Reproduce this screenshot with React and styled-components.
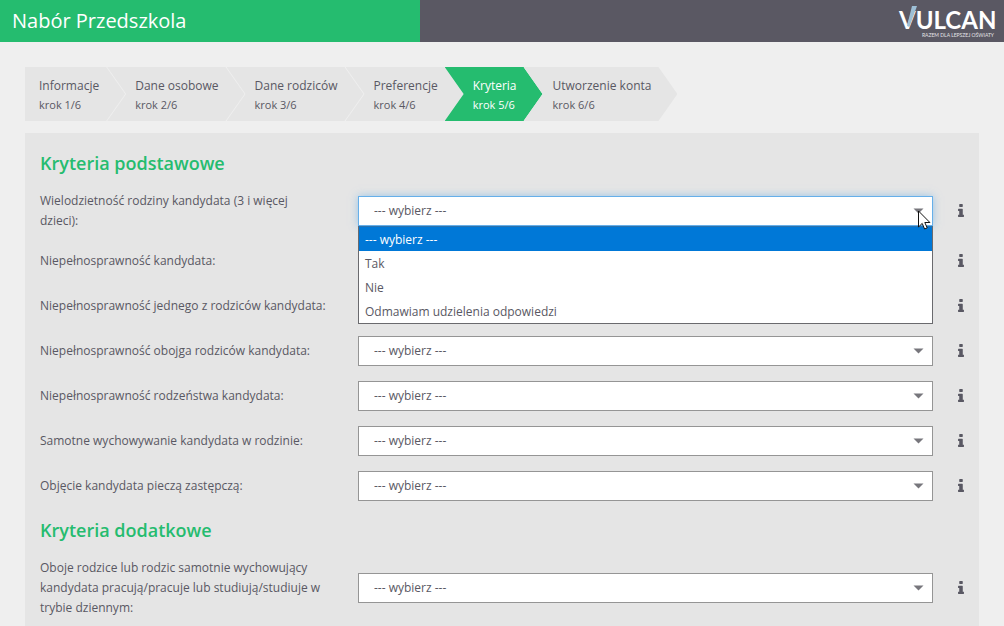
import React from "react";
import styled, { createGlobalStyle, css } from "styled-components";

const GlobalStyle = createGlobalStyle`
  *, *::before, *::after { box-sizing: border-box; }
  body {
    margin: 0;
    background: #efefef;
    color: #595863;
    font-family: "Open Sans", "Noto Sans", sans-serif;
    font-size: 12px;
    line-height: 20px;
  }
`;

const Header = styled.header`
  display: flex;
  height: 42px;
  background: #5a5863;
`;

const Title = styled.h1`
  flex: 0 1 420px;
  margin: 0;
  padding: 0 12px;
  background: #25bc6f;
  color: #fff;
  font-size: 20px;
  font-weight: 400;
  line-height: 42px;
  white-space: nowrap;
`;

const Logo = styled.svg`
  display: block;
  margin-left: auto;
  margin-right: 8px;
`;

const Main = styled.main`
  padding: 25px 25px 0;
`;

const Steps = styled.ol`
  display: flex;
  margin: 0 0 12px;
  padding: 0;
  list-style: none;
`;

const Step = styled.li`
  height: 54px;
  margin-left: -18px;
  padding: 9px 26px 0 28px;
  background: #e5e5e5;
  white-space: nowrap;
  clip-path: polygon(0 0, calc(100% - 19px) 0, 100% 50%, calc(100% - 19px) 100%, 0 100%, 19px 50%);

  &:first-child {
    margin-left: 0;
    padding-left: 14px;
    clip-path: polygon(0 0, calc(100% - 19px) 0, 100% 50%, calc(100% - 19px) 100%, 0 100%);
  }

  ${({ $active }) =>
    $active &&
    css`
      background: #25bc6f;
      color: #fff;

      &, & + li {
        margin-left: -19px;
      }

      & + li {
        padding-left: 29px;
      }
    `}
`;

const StepName = styled.div`
  line-height: 20px;
`;

const StepCount = styled.div`
  font-size: 11px;
  line-height: 17px;
`;

const Panel = styled.form`
  padding: 9px 0 16px;
  background: #e5e5e5;
`;

const SectionTitle = styled.h2`
  margin: 0;
  padding: 0 15px;
  color: #25bc6f;
  font-size: 18px;
  font-weight: 600;
  line-height: 42px;
`;

const Row = styled.div`
  display: flex;
  align-items: center;
  padding: 7px 0 8px;
`;

const Label = styled.label`
  flex: 0 0 33.3333%;
  padding: 0 15px;
`;

const Field = styled.div`
  position: relative;
  flex: 1;
  min-width: 0;
  margin-left: 15px;
`;

const Select = styled.select`
  display: block;
  width: 100%;
  height: 30px;
  padding: 0 32px 0 15px;
  appearance: none;
  border: 1px solid ${({ $open }) => ($open ? "#66afe9" : "#959595")};
  border-radius: 0;
  outline: none;
  background: #fff;
  box-shadow: ${({ $open }) => ($open ? "0 0 8px rgba(102, 175, 233, 0.6)" : "none")};
  color: #595863;
  font: inherit;
`;

const Caret = styled.svg`
  position: absolute;
  top: 12px;
  right: 9px;
  pointer-events: none;
`;

const Menu = styled.ul`
  position: absolute;
  z-index: 1;
  top: 100%;
  left: 0;
  right: 0;
  margin: 0;
  padding: 0;
  border: 1px solid #6a6a6e;
  border-top-color: #2b72ae;
  background: #fff;
  list-style: none;
`;

const MenuItem = styled.li`
  padding: 2px 6px 0;
  background: ${({ $selected }) => ($selected ? "#0078d7" : "#fff")};
  color: ${({ $selected }) => ($selected ? "#fff" : "#595863")};
  line-height: 22px;
`;

const Pointer = styled.svg`
  position: absolute;
  z-index: 2;
  top: 14px;
  right: 2px;
  pointer-events: none;
`;

const InfoButton = styled.button`
  display: flex;
  flex: 0 0 46px;
  align-items: center;
  justify-content: center;
  height: 30px;
  padding: 0 0 1px 10px;
  border: 0;
  background: none;
  color: #595863;
`;

const OPTIONS = ["--- wybierz ---", "Tak", "Nie", "Odmawiam udzielenia odpowiedzi"];

const STEPS = [
  "Informacje",
  "Dane osobowe",
  "Dane rodziców",
  "Preferencje",
  "Kryteria",
  "Utworzenie konta",
];

const SECTIONS = [
  {
    title: "Kryteria podstawowe",
    fields: [
      { id: "wielodzietnosc", label: "Wielodzietność rodziny kandydata (3 i więcej dzieci):", open: true },
      { id: "kandydat", label: "Niepełnosprawność kandydata:" },
      { id: "rodzic", label: "Niepełnosprawność jednego z rodziców kandydata:" },
      { id: "rodzice", label: "Niepełnosprawność obojga rodziców kandydata:" },
      { id: "rodzenstwo", label: "Niepełnosprawność rodzeństwa kandydata:" },
      { id: "samotne", label: "Samotne wychowywanie kandydata w rodzinie:" },
      { id: "piecza", label: "Objęcie kandydata pieczą zastępczą:" },
    ],
  },
  {
    title: "Kryteria dodatkowe",
    fields: [
      {
        id: "praca",
        label:
          "Oboje rodzice lub rodzic samotnie wychowujący kandydata pracują/pracuje lub studiują/studiuje w trybie dziennym:",
      },
    ],
  },
];

function VulcanLogo() {
  return (
    <Logo width="100" height="42" viewBox="0 0 100 42" role="img" aria-label="Vulcan">
      <text x="3" y="29" fill="#fff" fontFamily="Lato, sans-serif" fontSize="24" fontWeight="700">
        VULCAN
      </text>
      <path d="M16 6h5L13.500 27l-2.500-1z" fill="#9dbfd6" />
      <text x="98" y="37" fill="#e4e4e8" fontFamily="Lato, sans-serif" fontSize="5" textAnchor="end">
        RAZEM DLA LEPSZEJ OŚWIATY
      </text>
    </Logo>
  );
}

function InfoIcon() {
  return (
    <svg width="6" height="13" viewBox="0 128 640 1408" fill="currentColor" aria-hidden="true">
      <path d="M640 1344v128q0 26-19 45t-45 19h-512q-26 0-45-19t-19-45v-128q0-26 19-45t45-19h64v-384h-64q-26 0-45-19t-19-45v-128q0-26 19-45t45-19h384q26 0 45 19t19 45v576h64q26 0 45 19t19 45zM512 192v192q0 26-19 45t-45 19h-256q-26 0-45-19t-19-45v-192q0-26 19-45t45-19h256q26 0 45 19t19 45z" />
    </svg>
  );
}

function CriterionRow({ id, label, open }) {
  return (
    <Row>
      <Label htmlFor={id}>{label}</Label>
      <Field>
        <Select id={id} $open={open}>
          {OPTIONS.map((option) => (
            <option key={option}>{option}</option>
          ))}
        </Select>
        <Caret width="11" height="6" viewBox="0 0 11 6" aria-hidden="true">
          <path d="M0.500 0.500h10l-5 5z" fill="#77767c" />
        </Caret>
        {open && (
          <>
            <Menu role="listbox" aria-label={label}>
              {OPTIONS.map((option, i) => (
                <MenuItem key={option} role="option" aria-selected={i === 0} $selected={i === 0}>
                  {option}
                </MenuItem>
              ))}
            </Menu>
            <Pointer width="13" height="20" viewBox="0 0 13 20" aria-hidden="true">
              <path
                d="M0.500 1v16l3.700-3.600 2.400 5.600 2.600-1.100-2.400-5.400h5.100z"
                fill="#fff"
                stroke="#111"
                strokeWidth="1"
              />
            </Pointer>
          </>
        )}
      </Field>
      <InfoButton type="button" aria-label="Informacja">
        <InfoIcon />
      </InfoButton>
    </Row>
  );
}

export default function App() {
  return (
    <>
      <GlobalStyle />
      <Header>
        <Title>Nabór Przedszkola</Title>
        <VulcanLogo />
      </Header>
      <Main>
        <Steps>
          {STEPS.map((name, i) => (
            <Step key={name} $active={i === 4} aria-current={i === 4 ? "step" : undefined}>
              <StepName>{name}</StepName>
              <StepCount>{`krok ${i + 1}/${STEPS.length}`}</StepCount>
            </Step>
          ))}
        </Steps>
        <Panel>
          {SECTIONS.map((section) => (
            <section key={section.title}>
              <SectionTitle>{section.title}</SectionTitle>
              {section.fields.map((field) => (
                <CriterionRow key={field.id} {...field} />
              ))}
            </section>
          ))}
        </Panel>
      </Main>
    </>
  );
}
